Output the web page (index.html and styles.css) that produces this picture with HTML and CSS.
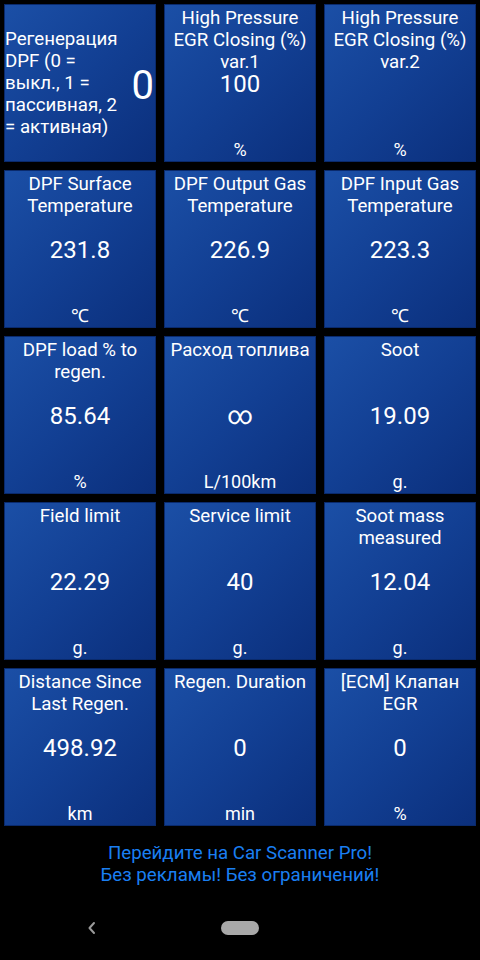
FILE: index.html
```html
<!DOCTYPE html>
<html lang="ru">
<head>
  <meta charset="UTF-8">
  <title>Car Scanner</title>
  <link rel="stylesheet" href="styles.css">
</head>
<body>
  <div class="grid">
    <div class="tile wide">
      <div class="title">Регенерация DPF (0 = выкл., 1 = пассивная, 2 = активная)</div>
      <div class="value big">0</div>
    </div>
    <div class="tile">
      <div class="title">High Pressure EGR Closing (%) var.1</div>
      <div class="value">100</div>
      <div class="unit">%</div>
    </div>
    <div class="tile">
      <div class="title">High Pressure EGR Closing (%) var.2</div>
      <div class="unit">%</div>
    </div>

    <div class="tile">
      <div class="title">DPF Surface Temperature</div>
      <div class="value">231.8</div>
      <div class="unit">℃</div>
    </div>
    <div class="tile">
      <div class="title">DPF Output Gas Temperature</div>
      <div class="value">226.9</div>
      <div class="unit">℃</div>
    </div>
    <div class="tile">
      <div class="title">DPF Input Gas Temperature</div>
      <div class="value">223.3</div>
      <div class="unit">℃</div>
    </div>

    <div class="tile">
      <div class="title">DPF load % to regen.</div>
      <div class="value">85.64</div>
      <div class="unit">%</div>
    </div>
    <div class="tile">
      <div class="title">Расход топлива</div>
      <div class="value inf">∞</div>
      <div class="unit">L/100km</div>
    </div>
    <div class="tile">
      <div class="title">Soot</div>
      <div class="value">19.09</div>
      <div class="unit">g.</div>
    </div>

    <div class="tile">
      <div class="title">Field limit</div>
      <div class="value">22.29</div>
      <div class="unit">g.</div>
    </div>
    <div class="tile">
      <div class="title">Service limit</div>
      <div class="value">40</div>
      <div class="unit">g.</div>
    </div>
    <div class="tile">
      <div class="title">Soot mass measured</div>
      <div class="value">12.04</div>
      <div class="unit">g.</div>
    </div>

    <div class="tile">
      <div class="title">Distance Since Last Regen.</div>
      <div class="value">498.92</div>
      <div class="unit">km</div>
    </div>
    <div class="tile">
      <div class="title">Regen. Duration</div>
      <div class="value">0</div>
      <div class="unit">min</div>
    </div>
    <div class="tile">
      <div class="title">[ECM] Клапан EGR</div>
      <div class="value">0</div>
      <div class="unit">%</div>
    </div>
  </div>

  <!-- promo banner -->
  <div class="promo">
    Перейдите на Car Scanner Pro!<br>
    Без рекламы! Без ограничений!
  </div>

  <!-- system navigation -->
  <div class="navbar">
    <svg class="back" width="12" height="16" viewBox="0 0 12 16">
      <path d="M8 3 L3.5 8 L8 13" fill="none" stroke="#9a9a9a" stroke-width="2" stroke-linecap="round" stroke-linejoin="round"/>
    </svg>
    <div class="home"></div>
  </div>
</body>
</html>
```

FILE: styles.css
```css
body {
  margin: 0;
  background: #000;
  font-family: Roboto, "Noto Sans", sans-serif;
  color: #fff;
  width: 480px;
  height: 960px;
  overflow: hidden;
}
.grid {
  display: grid;
  grid-template-columns: repeat(3, 152px);
  grid-auto-rows: 158px;
  gap: 8px;
  padding: 4px;
}
.tile {
  display: grid;
  grid-template-areas: "cell";
  background: linear-gradient(135deg, #1b4fa6 0%, #123f93 50%, #0b2f7c 100%);
  border: 1px solid #0a2a6c;
  box-sizing: border-box;
  text-align: center;
  padding: 0 2px;
}
.tile > div {
  grid-area: cell;
}
.title {
  align-self: start;
  font-size: 18.7px;
  line-height: 22px;
  padding-top: 2px;
}
.value {
  align-self: center;
  font-size: 24px;
  line-height: 18px;
  padding-top: 2px;
}
.value.inf {
  font-size: 25px;
}
.unit {
  align-self: end;
  font-size: 18px;
  line-height: 22px;
}
.tile.wide {
  grid-template-areas: "title value";
  grid-template-columns: 121px 1fr;
  text-align: left;
  padding: 0 1px 0 0;
}
.tile.wide .title {
  grid-area: title;
  align-self: center;
  padding-top: 0;
}
.tile.wide .big {
  grid-area: value;
  justify-self: end;
  font-size: 40px;
  line-height: 44px;
  padding-top: 6px;
}
.promo {
  margin-top: 12px;
  text-align: center;
  color: #1a7ff2;
  font-size: 18.7px;
  line-height: 22px;
}
.navbar {
  display: flex;
  align-items: center;
  height: 40px;
  margin-top: 22px;
}
.back {
  margin-left: 86px;
}
.home {
  width: 38px;
  height: 14px;
  border-radius: 7px;
  background: #a8a8a8;
  margin-left: 123px;
}
```
